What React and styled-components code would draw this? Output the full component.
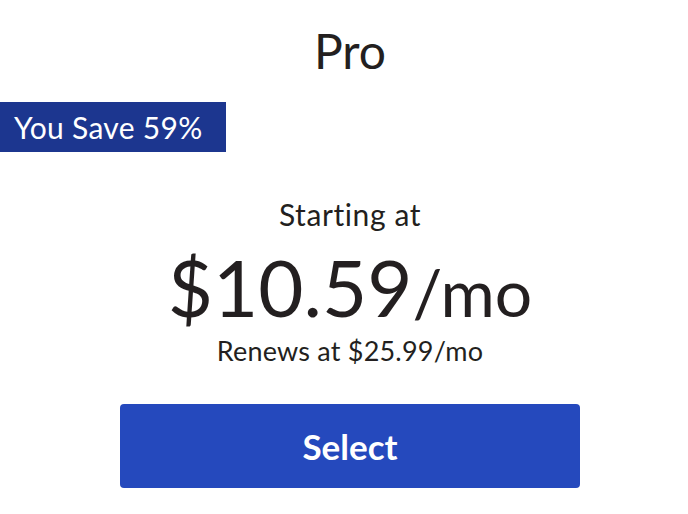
import React from "react";
import styled, { createGlobalStyle } from "styled-components";

const Global = createGlobalStyle`
  body {
    margin: 0;
    background: #fff;
    font-family: "Lato", "Liberation Sans", sans-serif;
    color: #231f20;
  }
`;

const Card = styled.div`
  display: flex;
  flex-direction: column;
  align-items: center;
  width: 688px;
  padding: 23px 0 0 12px;
  box-sizing: border-box;
`;

const PlanName = styled.h2`
  margin: 0;
  font-size: 48px;
  font-weight: 400;
  line-height: 56px;
`;

const SaveBadge = styled.div`
  align-self: flex-start;
  margin: 23px 0 0 -12px;
  height: 50px;
  padding: 0 23px 0 14px;
  display: flex;
  align-items: center;
  background: #1c368f;
  color: #fff;
  font-size: 30px;
  letter-spacing: 0.3px;
  font-weight: 400;
`;

const StartLabel = styled.div`
  margin-top: 44px;
  font-size: 30px;
  letter-spacing: 0.6px;
  line-height: 36px;
`;

const Price = styled.div`
  margin-top: 16px;
  font-size: 78px;
  line-height: 78px;
  font-weight: 400;

  span {
    font-size: 66px;
  }
`;

const Renews = styled.div`
  margin-top: 5px;
  font-size: 27px;
  line-height: 30px;
  letter-spacing: 0.2px;
`;

const SelectButton = styled.button`
  margin-top: 38px;
  width: 460px;
  height: 84px;
  border: none;
  border-radius: 4px;
  background: #2549bd;
  color: #fff;
  font-family: inherit;
  font-size: 35px;
  font-weight: 700;
  cursor: pointer;
`;

export default function App() {
  return (
    <>
      <Global />
      <Card>
        <PlanName>Pro</PlanName>
        <SaveBadge>You Save 59%</SaveBadge>
        <StartLabel>Starting at</StartLabel>
        <Price>
          $10.59<span>/mo</span>
        </Price>
        <Renews>Renews at $25.99/mo</Renews>
        <SelectButton>Select</SelectButton>
      </Card>
    </>
  );
}
